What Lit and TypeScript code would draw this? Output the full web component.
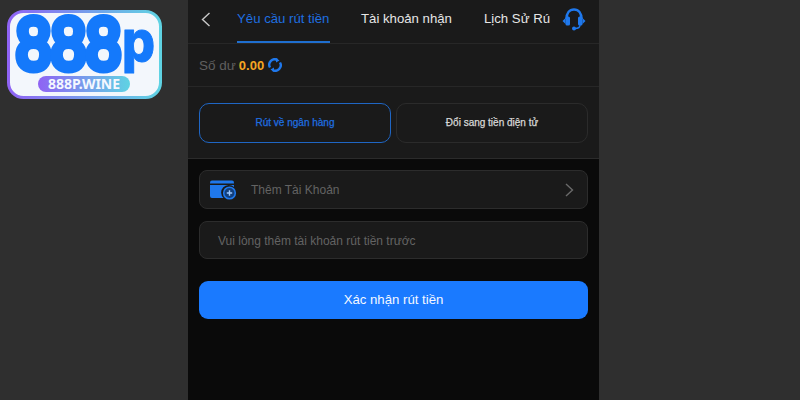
import { LitElement, html, css } from "lit";
import { customElement } from "lit/decorators.js";

@customElement("app-root")
export class AppRoot extends LitElement {
  static styles = css`
    :host {
      display: block;
      width: 800px;
      height: 400px;
      overflow: hidden;
      position: relative;
      background: #2f2f2f;
      font-family: "Liberation Sans", Arial, sans-serif;
    }
    .logo {
      position: absolute;
      left: 7px;
      top: 10px;
      width: 155px;
      height: 89px;
      overflow: visible;
    }
    .panel {
      width: 411px;
      height: 400px;
      margin-left: 188px;
      background: #0a0a0a;
    }
    .nav {
      display: flex;
      align-items: center;
      height: 43px;
      padding-left: 13px;
      background: #1a1a1a;
      border-bottom: 1px solid #272727;
    }
    .back {
      width: 10px;
      height: 15px;
      margin-right: 26px;
      margin-top: -4px;
    }
    .tab {
      height: 43px;
      box-sizing: border-box;
      padding-top: 11px;
      font-size: 13.2px;
      line-height: 16px;
      color: #e6e6e6;
      white-space: nowrap;
    }
    .tab.active {
      width: 93px;
      color: #1f6fe0;
      border-bottom: 2px solid #1f6fd0;
      margin-right: 31px;
    }
    .tab.second {
      width: 90px;
      margin-right: 33px;
    }
    .tab.third {
      width: 65px;
      margin-right: 13px;
    }
    .support {
      width: 24px;
      height: 24px;
      margin-top: -5px;
    }
    .balance {
      display: flex;
      align-items: center;
      height: 42px;
      padding-left: 11px;
      background: #1a1a1a;
      border-bottom: 1px solid #272727;
      font-size: 13.5px;
      color: #5f5f5f;
    }
    .balance b {
      margin-left: 3px;
      font-size: 13px;
      color: #f5a623;
    }
    .refresh {
      width: 14px;
      height: 14px;
      margin-left: 4px;
    }
    .kinds {
      display: flex;
      gap: 5px;
      height: 72px;
      box-sizing: border-box;
      padding: 16px 11px 15px;
      background: #1a1a1a;
      border-bottom: 1px solid #2b2b2b;
    }
    .kind {
      display: flex;
      flex: 1;
      align-items: center;
      justify-content: center;
      padding-bottom: 2px;
      border: 1px solid #2b2b2b;
      border-radius: 10px;
      font-size: 10px;
      -webkit-text-stroke: 0.25px currentColor;
      color: #d8d8d8;
    }
    .kind.active {
      border-color: #1f66c4;
      color: #1f6fe0;
    }
    .form {
      display: flex;
      flex-direction: column;
      gap: 12px;
      padding: 11px 11px 0;
    }
    .row {
      display: flex;
      align-items: center;
      height: 39px;
      box-sizing: border-box;
      padding-top: 1px;
      background: #1a1a1a;
      border: 1px solid #2c2c2c;
      border-radius: 8px;
      font-size: 12px;
      color: #636363;
    }
    .wallet {
      width: 27px;
      height: 20px;
      margin: 0 14px 0 10px;
    }
    .label {
      flex: 1;
    }
    .next {
      width: 9px;
      height: 14px;
      margin-right: 13px;
    }
    .note {
      height: 38px;
      padding-left: 18px;
    }
    .submit {
      display: flex;
      align-items: center;
      justify-content: center;
      height: 38px;
      box-sizing: border-box;
      padding-bottom: 1px;
      margin-top: 10px;
      background: #1a7aff;
      border-radius: 9px;
      font-size: 13.2px;
      color: #f4f8ff;
    }
  `;

  renderLogo() {
    return html`<svg class="logo" viewBox="0 0 155 89">
      <defs>
        <linearGradient id="edge" x1="0" y1="0" x2="1" y2="0">
          <stop offset="0" stop-color="#8f63f4" />
          <stop offset="1" stop-color="#5fd3e3" />
        </linearGradient>
      </defs>
      <rect x="1.5" y="1.5" width="152" height="86" rx="15" fill="#f3f7fc" stroke="url(#edge)" stroke-width="3" />
      <g fill="#1479fb" stroke="#1479fb" stroke-linejoin="round">
        <text x="9" y="58.5" font-family="Liberation Sans" font-size="73" stroke-width="8" textLength="105" lengthAdjust="spacingAndGlyphs">888</text>
        <text x="115" y="51" font-family="Inter" font-weight="800" font-size="56" textLength="33" lengthAdjust="spacingAndGlyphs">p</text>
      </g>
      <rect x="31" y="66" width="92" height="16" rx="8" fill="url(#edge)" />
      <text x="77" y="78.5" text-anchor="middle" font-family="Noto Sans" font-weight="700" font-size="14" fill="#f4f8ff">888P.WINE</text>
    </svg>`;
  }

  render() {
    return html`
      <div class="panel">
        <div class="nav">
          <svg class="back" viewBox="0 0 10 15" fill="none" stroke="#c8c8c8" stroke-width="1.4">
            <path d="M8.5 1 L1.5 7.5 L8.5 14" />
          </svg>
          <div class="tab active">Yêu cầu rút tiền</div>
          <div class="tab second">Tài khoản nhận</div>
          <div class="tab third">Lịch Sử Rú</div>
          <svg class="support" viewBox="0 0 24 24" fill="#1f78ec">
            <path d="M4.5 12 C4.5 6 7.5 2.5 12 2.5 C16.5 2.5 19.5 6 19.5 12" fill="none" stroke="#1f78ec" stroke-width="2.6" />
            <rect x="3.5" y="9.5" width="4.5" height="9" rx="1.6" />
            <rect x="16" y="9.5" width="4.5" height="9" rx="1.6" />
            <path d="M3.5 11 L0.5 14 L3.5 17 Z M20.5 11 L23.5 14 L20.5 17 Z" />
            <path d="M18 18 C18 20.5 15.5 21.5 13 21.5" fill="none" stroke="#1f78ec" stroke-width="1.4" />
            <circle cx="12" cy="21.5" r="2" />
          </svg>
        </div>
        <div class="balance">
          <span>Số dư</span>
          <b>0.00</b>
          <svg class="refresh" viewBox="0 0 14 14" fill="none" stroke="#1f78ec" stroke-width="2.4">
            <path d="M2 9.5 A5.5 5.5 0 0 1 9.5 2" />
            <path d="M12 4.5 A5.5 5.5 0 0 1 4.5 12" />
            <path d="M8 0 L11.5 2.5 L8 4.5 Z M6 14 L2.5 11.5 L6 9.5 Z" fill="#1f78ec" stroke="none" />
          </svg>
        </div>
        <div class="kinds">
          <div class="kind active">Rút về ngân hàng</div>
          <div class="kind">Đổi sang tiền điện tử</div>
        </div>
        <div class="form">
          <div class="row">
            <svg class="wallet" viewBox="0 0 27 20">
              <path d="M2 0.5 H22 Q24 0.5 24 2.5 V3.5 H0 V2.5 Q0 0.5 2 0.5 Z" fill="#1f78ec" />
              <path d="M0 5 H24 V7 A7 7 0 0 0 13.5 18 H2 Q0 18 0 16 Z" fill="#1f78ec" />
              <circle cx="19.5" cy="13" r="5.8" fill="#123f7c" stroke="#1f78ec" stroke-width="1.6" />
              <path d="M16.8 13 H22.2 M19.5 10.3 V15.7" stroke="#9cc8ff" stroke-width="1.4" />
            </svg>
            <span class="label">Thêm Tài Khoản</span>
            <svg class="next" viewBox="0 0 9 14" fill="none" stroke="#6a6a6a" stroke-width="1.4">
              <path d="M1 1 L7.5 7 L1 13" />
            </svg>
          </div>
          <div class="row note">Vui lòng thêm tài khoản rút tiền trước</div>
          <div class="submit">Xác nhận rút tiền</div>
        </div>
      </div>
      ${this.renderLogo()}
    `;
  }
}
